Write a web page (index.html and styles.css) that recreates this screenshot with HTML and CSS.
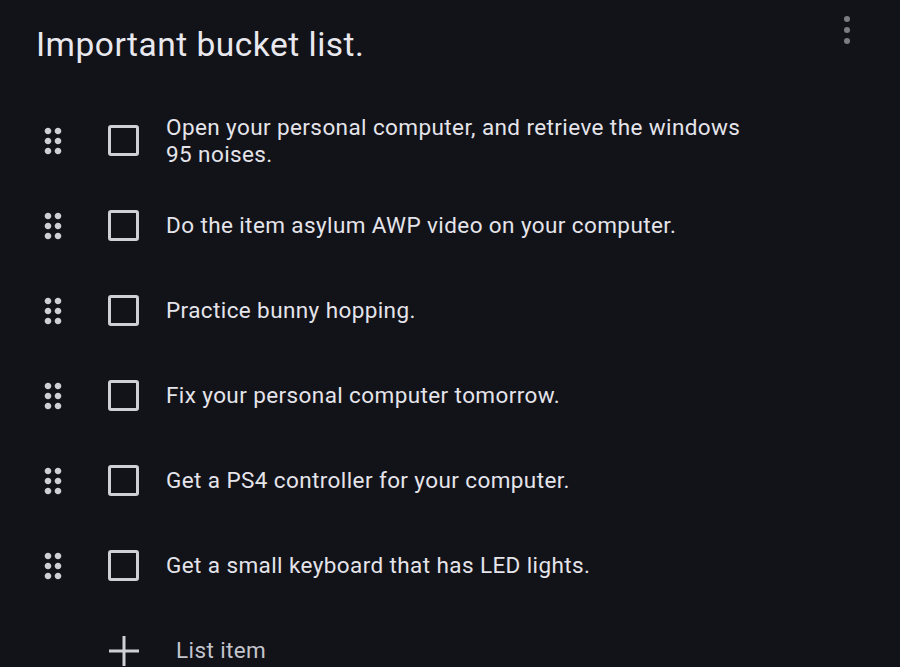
FILE: index.html
```html
<!DOCTYPE html>
<html lang="en">
<head>
  <meta charset="UTF-8" />
  <title>Important bucket list.</title>
  <link rel="stylesheet" href="styles.css">
</head>
<body>

<div class="note">
  <div class="note-header">
    <h1 class="note-title">Important bucket list.</h1>
    <button class="more-btn" aria-label="More">
      <svg viewBox="0 0 6 28" width="6" height="28">
        <circle cx="3" cy="3" r="3" />
        <circle cx="3" cy="14" r="3" />
        <circle cx="3" cy="25" r="3" />
      </svg>
    </button>
  </div>

  <ul class="checklist">
    <li class="check-item">
      <span class="grip">
        <svg viewBox="0 0 24 24" width="40" height="40"><path d="M11 18c0 1.1-.9 2-2 2s-2-.9-2-2 .9-2 2-2 2 .9 2 2zm-2-8c-1.1 0-2 .9-2 2s.9 2 2 2 2-.9 2-2-.9-2-2-2zm0-6c-1.1 0-2 .9-2 2s.9 2 2 2 2-.9 2-2-.9-2-2-2zm6 4c1.1 0 2-.9 2-2s-.9-2-2-2-2 .9-2 2 .9 2 2 2zm0 2c-1.1 0-2 .9-2 2s.9 2 2 2 2-.9 2-2-.9-2-2-2zm0 6c-1.1 0-2 .9-2 2s.9 2 2 2 2-.9 2-2-.9-2-2-2z"/></svg>
      </span>
      <span class="box"></span>
      <span class="item-text">Open your personal computer, and retrieve the windows 95 noises.</span>
    </li>
    <li class="check-item">
      <span class="grip">
        <svg viewBox="0 0 24 24" width="40" height="40"><path d="M11 18c0 1.1-.9 2-2 2s-2-.9-2-2 .9-2 2-2 2 .9 2 2zm-2-8c-1.1 0-2 .9-2 2s.9 2 2 2 2-.9 2-2-.9-2-2-2zm0-6c-1.1 0-2 .9-2 2s.9 2 2 2 2-.9 2-2-.9-2-2-2zm6 4c1.1 0 2-.9 2-2s-.9-2-2-2-2 .9-2 2 .9 2 2 2zm0 2c-1.1 0-2 .9-2 2s.9 2 2 2 2-.9 2-2-.9-2-2-2zm0 6c-1.1 0-2 .9-2 2s.9 2 2 2 2-.9 2-2-.9-2-2-2z"/></svg>
      </span>
      <span class="box"></span>
      <span class="item-text">Do the item asylum AWP video on your computer.</span>
    </li>
    <li class="check-item">
      <span class="grip">
        <svg viewBox="0 0 24 24" width="40" height="40"><path d="M11 18c0 1.1-.9 2-2 2s-2-.9-2-2 .9-2 2-2 2 .9 2 2zm-2-8c-1.1 0-2 .9-2 2s.9 2 2 2 2-.9 2-2-.9-2-2-2zm0-6c-1.1 0-2 .9-2 2s.9 2 2 2 2-.9 2-2-.9-2-2-2zm6 4c1.1 0 2-.9 2-2s-.9-2-2-2-2 .9-2 2 .9 2 2 2zm0 2c-1.1 0-2 .9-2 2s.9 2 2 2 2-.9 2-2-.9-2-2-2zm0 6c-1.1 0-2 .9-2 2s.9 2 2 2 2-.9 2-2-.9-2-2-2z"/></svg>
      </span>
      <span class="box"></span>
      <span class="item-text">Practice bunny hopping.</span>
    </li>
    <li class="check-item">
      <span class="grip">
        <svg viewBox="0 0 24 24" width="40" height="40"><path d="M11 18c0 1.1-.9 2-2 2s-2-.9-2-2 .9-2 2-2 2 .9 2 2zm-2-8c-1.1 0-2 .9-2 2s.9 2 2 2 2-.9 2-2-.9-2-2-2zm0-6c-1.1 0-2 .9-2 2s.9 2 2 2 2-.9 2-2-.9-2-2-2zm6 4c1.1 0 2-.9 2-2s-.9-2-2-2-2 .9-2 2 .9 2 2 2zm0 2c-1.1 0-2 .9-2 2s.9 2 2 2 2-.9 2-2-.9-2-2-2zm0 6c-1.1 0-2 .9-2 2s.9 2 2 2 2-.9 2-2-.9-2-2-2z"/></svg>
      </span>
      <span class="box"></span>
      <span class="item-text">Fix your personal computer tomorrow.</span>
    </li>
    <li class="check-item">
      <span class="grip">
        <svg viewBox="0 0 24 24" width="40" height="40"><path d="M11 18c0 1.1-.9 2-2 2s-2-.9-2-2 .9-2 2-2 2 .9 2 2zm-2-8c-1.1 0-2 .9-2 2s.9 2 2 2 2-.9 2-2-.9-2-2-2zm0-6c-1.1 0-2 .9-2 2s.9 2 2 2 2-.9 2-2-.9-2-2-2zm6 4c1.1 0 2-.9 2-2s-.9-2-2-2-2 .9-2 2 .9 2 2 2zm0 2c-1.1 0-2 .9-2 2s.9 2 2 2 2-.9 2-2-.9-2-2-2zm0 6c-1.1 0-2 .9-2 2s.9 2 2 2 2-.9 2-2-.9-2-2-2z"/></svg>
      </span>
      <span class="box"></span>
      <span class="item-text">Get a PS4 controller for your computer.</span>
    </li>
    <li class="check-item">
      <span class="grip">
        <svg viewBox="0 0 24 24" width="40" height="40"><path d="M11 18c0 1.1-.9 2-2 2s-2-.9-2-2 .9-2 2-2 2 .9 2 2zm-2-8c-1.1 0-2 .9-2 2s.9 2 2 2 2-.9 2-2-.9-2-2-2zm0-6c-1.1 0-2 .9-2 2s.9 2 2 2 2-.9 2-2-.9-2-2-2zm6 4c1.1 0 2-.9 2-2s-.9-2-2-2-2 .9-2 2 .9 2 2 2zm0 2c-1.1 0-2 .9-2 2s.9 2 2 2 2-.9 2-2-.9-2-2-2zm0 6c-1.1 0-2 .9-2 2s.9 2 2 2 2-.9 2-2-.9-2-2-2z"/></svg>
      </span>
      <span class="box"></span>
      <span class="item-text">Get a small keyboard that has LED lights.</span>
    </li>
    <li class="check-item add-item">
      <span class="grip"></span>
      <span class="plus">
        <svg viewBox="0 0 32 32" width="32" height="32"><path d="M16 1v30M1 16h30" /></svg>
      </span>
      <span class="item-text add-text">List item</span>
    </li>
  </ul>
</div>

</body>
</html>
```

FILE: styles.css
```css
body {
  margin: 0;
  background-color: #121219;
  font-family: Roboto, "Noto Sans", sans-serif;
  color: #e4e4ea;
}
.note {
  width: 900px;
}
.note-header {
  display: flex;
  justify-content: space-between;
  align-items: center;
  height: 98px;
  padding: 0 50px 10px 36px;
  box-sizing: border-box;
}
.note-title {
  margin: 0;
  font-size: 33.5px;
  font-weight: 400;
  letter-spacing: 0.5px;
  color: #e8e8ee;
}
.more-btn {
  background: none;
  border: none;
  padding: 0;
  margin-bottom: 26px;
  fill: #7c7c84;
}
.checklist {
  list-style: none;
  margin: 0;
  padding: 0;
}
.check-item {
  display: flex;
  align-items: center;
  min-height: 85px;
  padding-left: 33px;
}
.grip {
  width: 40px;
  height: 40px;
  fill: #cfcfd6;
}
.box {
  width: 31px;
  height: 31px;
  box-sizing: border-box;
  border: 3px solid #cfcfd6;
  border-radius: 3px;
  margin-left: 35px;
}
.item-text {
  margin-left: 27px;
  font-size: 22.5px;
  line-height: 27px;
  letter-spacing: 0.4px;
  max-width: 595px;
}
.plus {
  margin-left: 35px;
  width: 32px;
  height: 32px;
  stroke: #cfcfd6;
  stroke-width: 3;
}
.add-text {
  margin-left: 36px;
  color: #c4c4cc;
}
```
